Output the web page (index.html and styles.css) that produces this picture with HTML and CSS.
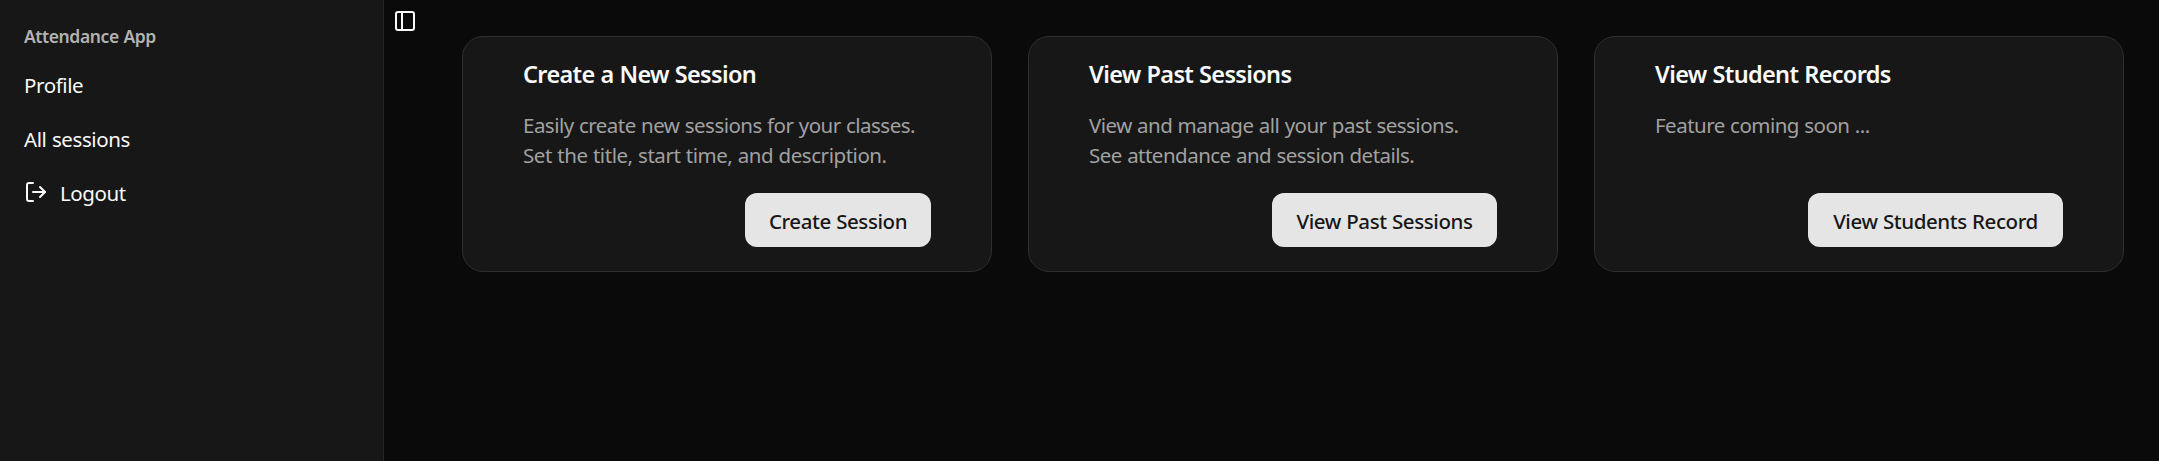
FILE: index.html
```html
<!DOCTYPE html>
<html lang="en">
<head>
<meta charset="utf-8">
<title>Attendance App</title>
<link rel="stylesheet" href="styles.css">
</head>
<body>
<div class="app">
  <aside class="sidebar">
    <div class="sidebar-label"><span>Attendance App</span></div>
    <nav class="menu">
      <a class="menu-item"><span>Profile</span></a>
      <a class="menu-item"><span>All sessions</span></a>
      <a class="menu-item">
        <svg class="icon icon-logout" viewBox="0 0 24 24"><path d="M9 21H5a2 2 0 0 1-2-2V5a2 2 0 0 1 2-2h4"/><path d="m16 17 5-5-5-5"/><path d="M21 12H9"/></svg>
        <span>Logout</span>
      </a>
    </nav>
  </aside>
  <main class="main">
    <button class="trigger" aria-label="Toggle sidebar">
      <svg class="icon" viewBox="0 0 24 24"><rect width="18" height="18" x="3" y="3" rx="2"/><path d="M9 3v18"/></svg>
    </button>
    <section class="cards">
      <article class="card">
        <h2 class="card-title"><span>Create a New Session</span></h2>
        <p class="card-text"><span>Easily create new sessions for your classes.</span><br><span class="line-wide">Set the title, start time, and description.</span></p>
        <div class="card-footer"><button class="button button-create"><span>Create Session</span></button></div>
      </article>
      <article class="card">
        <h2 class="card-title"><span>View Past Sessions</span></h2>
        <p class="card-text"><span>View and manage all your past sessions.</span><br><span>See attendance and session details.</span></p>
        <div class="card-footer"><button class="button button-past"><span>View Past Sessions</span></button></div>
      </article>
      <article class="card">
        <h2 class="card-title"><span>View Student Records</span></h2>
        <p class="card-text"><span>Feature coming soon ...</span></p>
        <div class="card-footer"><button class="button button-records"><span>View Students Record</span></button></div>
      </article>
    </section>
  </main>
</div>
</body>
</html>
```
FILE: styles.css
```css
* { box-sizing: border-box; }
body {
  margin: 0;
  background: #0a0a0a;
  color: #fafafa;
  font-family: "Noto Sans", "Open Sans", sans-serif;
  font-size: 20.5px;
  line-height: 30px;
  letter-spacing: -0.52px;
  word-spacing: 0.5px;
  overflow: hidden;
}
.app { display: flex; height: 461px; }
.sidebar {
  width: 384px;
  flex: none;
  padding: 12px;
  background: #171717;
  border-right: 1px solid #262626;
}
.sidebar-label {
  display: flex;
  align-items: center;
  height: 48px;
  padding: 0 12px;
  font-size: 17.5px;
  font-weight: 600;
  letter-spacing: -0.4px;
  color: #b2b2b2;
}
.menu { display: flex; flex-direction: column; gap: 6px; }
.menu-item {
  display: flex;
  align-items: center;
  gap: 12px;
  height: 48px;
  padding: 2px 12px 0;
  letter-spacing: -0.4px;
}
.icon {
  width: 24px;
  height: 24px;
  flex: none;
  fill: none;
  stroke: #fafafa;
  stroke-width: 2;
  stroke-linecap: round;
  stroke-linejoin: round;
}
.icon-logout { margin-bottom: 2px; }
.main { display: flex; flex: 1; align-items: flex-start; }
.trigger {
  display: flex;
  align-items: center;
  justify-content: center;
  width: 42px;
  height: 42px;
  margin: 0;
  padding: 0;
  border: 0;
  background: none;
}
.cards {
  display: grid;
  grid-template-columns: repeat(3, 1fr);
  gap: 36px;
  flex: 1;
  padding: 36px 35px 0 36px;
}
.card {
  display: flex;
  flex-direction: column;
  height: 236px;
  padding: 22px 60px 24px;
  border: 1px solid #2e2e2e;
  border-radius: 21px;
  background: #171717;
}
.card-title {
  margin: 0;
  font-size: 23.5px;
  font-weight: 600;
  line-height: 30px;
  letter-spacing: -0.67px;
}
.card-text { margin: 21px 0 0; color: #a1a1a1; }
.line-wide { letter-spacing: -0.45px; }
.card-footer { display: flex; justify-content: flex-end; margin-top: auto; }
.button {
  height: 54px;
  padding: 2px 0 0;
  border: 0;
  border-radius: 12px;
  background: #e5e5e5;
  color: #171717;
  font: inherit;
  font-weight: 500;
  letter-spacing: -0.42px;
  word-spacing: inherit;
  white-space: nowrap;
}
.button-create { width: 186px; }
.button-past { width: 225px; }
.button-records { width: 255px; }
```
